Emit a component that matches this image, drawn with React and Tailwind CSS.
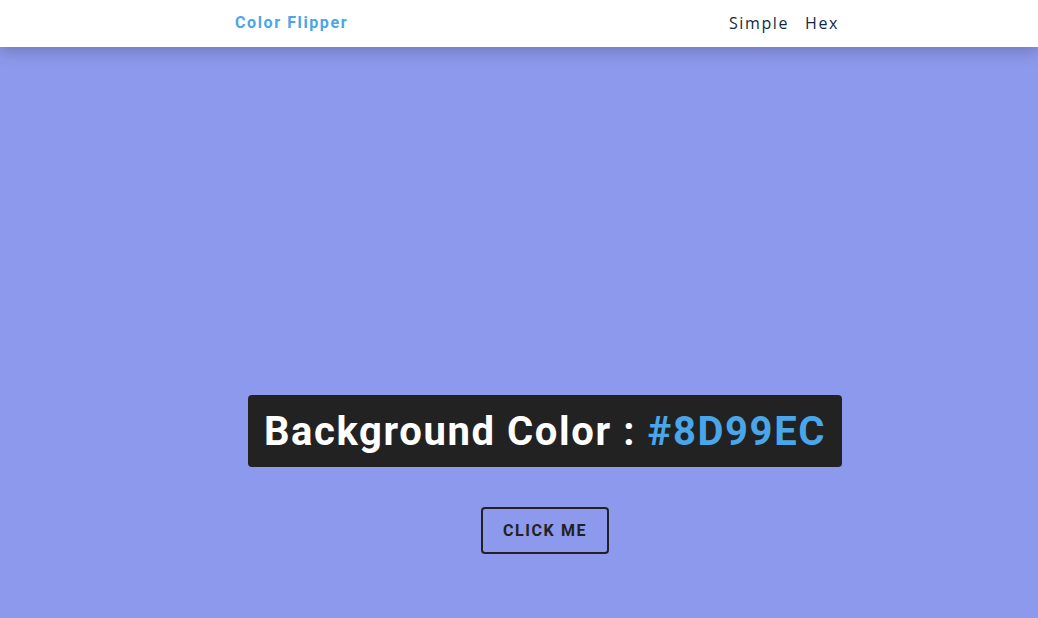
export default function App() {
  return (
    <div className="min-h-screen bg-[#8D99EC] font-['Roboto',sans-serif]">
      <nav className="h-[47px] bg-white shadow-[0_5px_15px_rgba(0,0,0,0.2)] flex items-center">
        <div className="w-[604px] ml-[235px] flex items-center justify-between pb-[1px]">
          <span className="text-[16px] font-bold tracking-[1.6px] text-[#49a6e9]">Color Flipper</span>
          <ul className="flex gap-[16px] font-['Open_Sans',sans-serif] text-[16px] font-medium tracking-[1.6px] text-[#102a42]">
            <li>Simple</li>
            <li>Hex</li>
          </ul>
        </div>
      </nav>
      <main className="flex flex-col items-center pl-[52px] pt-[348px]">
        <h2 className="bg-[#222] rounded-[4px] px-4 h-[72px] flex items-center pt-[2px] text-[40px] font-bold tracking-[1.6px] text-white">
          Background Color :&nbsp;<span className="text-[#49a6e9]">#8D99EC</span>
        </h2>
        <button className="mt-10 w-[128px] h-[47px] border-2 border-[#222] rounded-[4px] text-[16px] font-bold tracking-[1.6px] text-[#222] uppercase">
          click me
        </button>
      </main>
    </div>
  );
}
